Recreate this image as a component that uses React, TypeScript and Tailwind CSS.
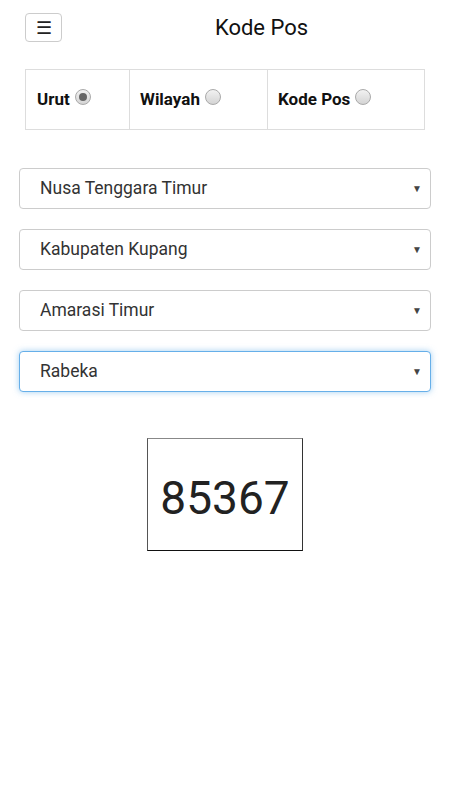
import React from "react";

const options = ["Nusa Tenggara Timur", "Kabupaten Kupang", "Amarasi Timur", "Rabeka"];

function Radio({ checked }: { checked?: boolean }) {
  return (
    <span className="relative ml-[5px] inline-block h-[16px] w-[16px] -translate-y-[7px] rounded-full border border-[#a9a9a9] bg-gradient-to-b from-[#f2f2f2] to-[#d4d4d4] align-middle">
      {checked && (
        <span className="absolute left-[3px] top-[3px] h-[8px] w-[8px] rounded-full bg-[#666]" />
      )}
    </span>
  );
}

function SelectBox({ label, focused }: { label: string; focused?: boolean }) {
  return (
    <div
      className={
        "flex h-[41px] items-center justify-between rounded-[4px] border bg-white pl-[20px] pr-[8px] " +
        (focused
          ? "border-[#66afe9] shadow-[0_0_6px_rgba(102,175,233,0.6)]"
          : "border-[#cccccc]")
      }
    >
      <span className="text-[17.5px] text-[#333]">{label}</span>
      <span className="text-[10px] text-[#444]">▼</span>
    </div>
  );
}

export default function App() {
  return (
    <div className="min-h-[800px] bg-white font-['Roboto',sans-serif] text-[#111]">
      <div className="flex items-center pt-[11px]">
        <button className="ml-[25px] flex h-[29px] w-[37px] items-center justify-center rounded-[4px] border border-[#cccccc] bg-white text-[18px] leading-none text-[#222]">
          ☰
        </button>
        <div className="flex-1 pl-[11px] text-center text-[22px] text-[#111]">Kode Pos</div>
      </div>

      <div className="mx-[25px] mt-[25px] grid h-[61px] grid-cols-[103px_138px_1fr] border border-[#dddddd]">
        <div className="flex items-end pb-[17px] pl-[11px] text-[17px] font-bold">
          Urut<Radio checked />
        </div>
        <div className="flex items-end border-l border-[#dddddd] pb-[17px] pl-[10px] text-[17px] font-bold">
          Wilayah<Radio />
        </div>
        <div className="flex items-end border-l border-[#dddddd] pb-[17px] pl-[10px] text-[17px] font-bold">
          Kode Pos<Radio />
        </div>
      </div>

      <div className="mx-[19px] mt-[38px] flex flex-col gap-[20px]">
        {options.map((o, i) => (
          <SelectBox key={o} label={o} focused={i === options.length - 1} />
        ))}
      </div>

      <div className="mt-[46px] flex justify-center">
        <div className="flex h-[113px] w-[156px] items-center justify-center border border-t-[#888] border-l-[#555] border-r-[#333] border-b-[#111] pt-[8px] text-[46px] text-[#222]">
          85367
        </div>
      </div>
    </div>
  );
}
